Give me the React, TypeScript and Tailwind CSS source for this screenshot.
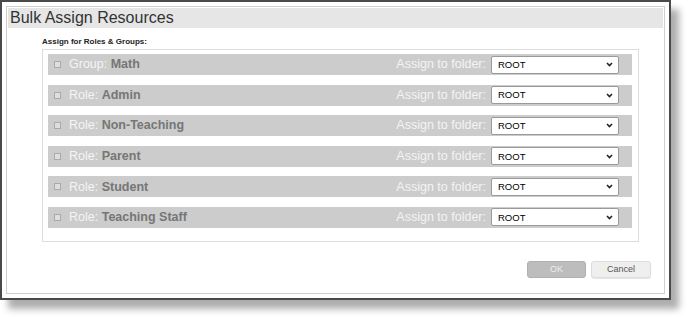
import React from "react";

const rows: { kind: string; name: string }[] = [
  { kind: "Group", name: "Math" },
  { kind: "Role", name: "Admin" },
  { kind: "Role", name: "Non-Teaching" },
  { kind: "Role", name: "Parent" },
  { kind: "Role", name: "Student" },
  { kind: "Role", name: "Teaching Staff" },
];

function Row({ kind, name }: { kind: string; name: string }) {
  return (
    <div className="h-[21px] bg-[#cccccc] flex items-center pl-[6px] pr-[13px]">
      <div className="w-[7px] h-[7px] border border-[#aaaaaa] bg-[#dedede]" />
      <div className="ml-[8px] text-[12.5px] leading-none">
        <span className="text-[#f4f4f4]">{kind}: </span>
        <span className="font-bold text-[#767676]">{name}</span>
      </div>
      <div className="ml-auto text-[12.5px] leading-none text-[#f4f4f4]">Assign to folder:</div>
      <div className="ml-[5px] w-[128px] h-[18px] bg-white border border-[#9a9a9a] rounded-[2px] flex items-center pl-[6px] pr-[5px]">
        <span className="text-[9.5px] text-black leading-none">ROOT</span>
        <svg className="ml-auto" width="7" height="5" viewBox="0 0 7 5">
          <path d="M1 1 L3.5 3.5 L6 1" stroke="#222" strokeWidth="1.6" fill="none" />
        </svg>
      </div>
    </div>
  );
}

export default function App() {
  return (
    <div
      className="w-[688px] h-[317px] bg-white overflow-hidden"
      style={{ fontFamily: '"Liberation Sans", Arial, sans-serif' }}
    >
      <div className="w-[671px] h-[300px] border-2 border-[#4a4a4a] bg-white p-[4px] shadow-[8px_9px_7px_rgba(0,0,0,0.32)]">
        <div className="h-full border border-[#cfcfcf] p-[1px] flex flex-col">
          <div className="h-[20px] bg-[#e6e6e6] pl-[2px] text-[16px] leading-[20px] text-[#333333]">
            Bulk Assign Resources
          </div>
          <div className="pl-[34px] pr-[24px] mt-[10px]">
            <div className="text-[8px] font-bold text-[#222] leading-none">Assign for Roles &amp; Groups:</div>
            <div className="mt-[3px] h-[193px] border border-[#dddddd] pl-[5px] pr-[6px] pt-[4px] flex flex-col gap-[9.6px]">
              {rows.map((r) => (
                <Row key={r.name} kind={r.kind} name={r.name} />
              ))}
            </div>
          </div>
          <div className="mt-auto mb-[14px] mr-[12px] flex justify-end gap-[5px]">
            <div className="w-[59px] h-[17px] rounded-[3px] bg-[#bdbdbd] border border-[#b0b0b0] flex items-center justify-center text-[9px] text-[#eeeeee]">
              OK
            </div>
            <div className="w-[60px] h-[17px] rounded-[3px] bg-[#efefef] border border-[#dddddd] flex items-center justify-center text-[9px] text-[#555555] shadow-[0_1px_1px_rgba(0,0,0,0.1)]">
              Cancel
            </div>
          </div>
        </div>
      </div>
    </div>
  );
}
